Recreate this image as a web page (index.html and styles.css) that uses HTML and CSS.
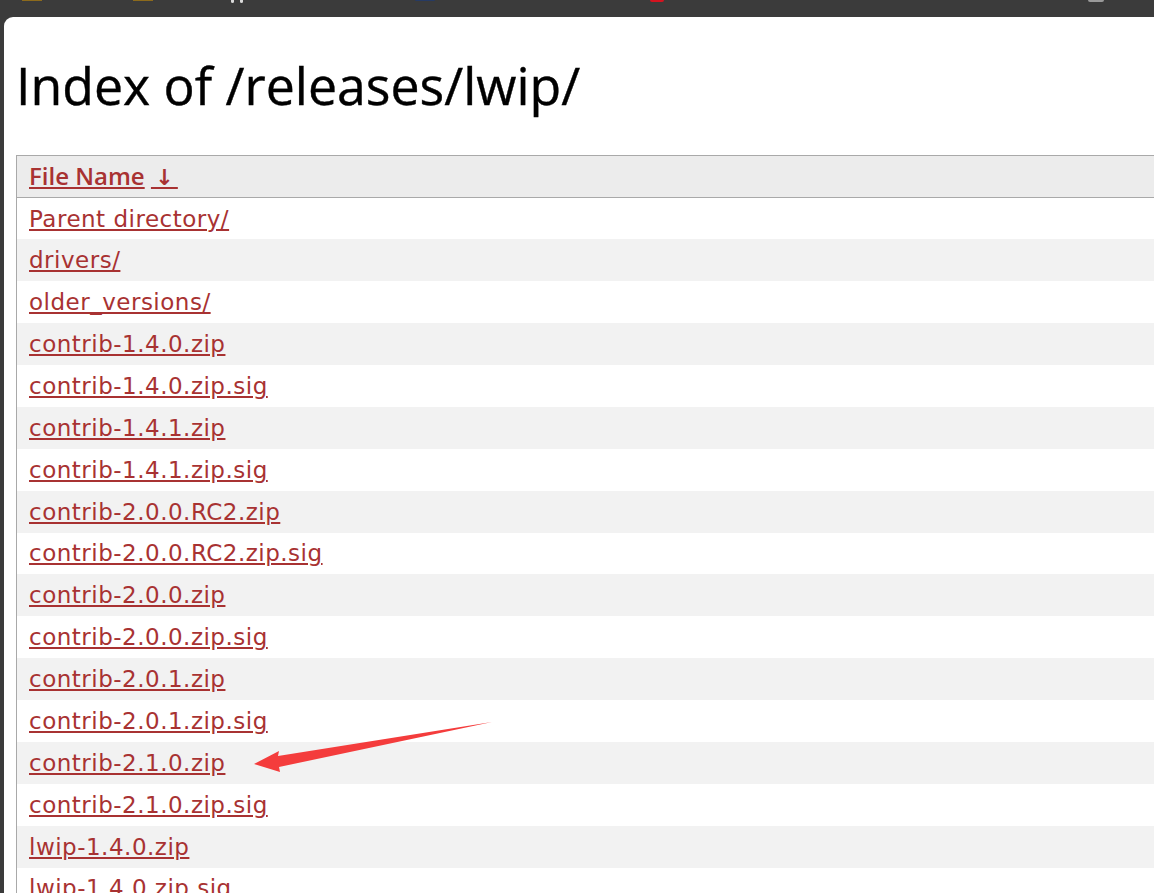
FILE: index.html
```html
<!DOCTYPE html>
<html>
<head>
<meta charset="utf-8">
<title>Index of /releases/lwip/</title>
<link rel="stylesheet" href="styles.css">
</head>
<body>
<div class="topbar">
  <span class="bm bm-gold b1"></span>
  <span class="bm bm-gold b2"></span>
  <span class="bm bm-white b3"></span>
  <span class="bm bm-white b4"></span>
  <span class="bm bm-navy b5"></span>
  <span class="bm bm-red b6"></span>
  <span class="bm bm-grey b7"></span>
</div>
<div class="page">
  <h1>Index of /releases/lwip/</h1>
  <table class="list">
    <thead>
      <tr><th><a href="#">File Name</a>&nbsp;<a href="#" class="sort">&nbsp;<span class="arr">↓</span>&nbsp;</a></th></tr>
    </thead>
    <tbody>
      <tr><td><a href="#">Parent directory/</a></td></tr>
      <tr><td><a href="#">drivers/</a></td></tr>
      <tr><td><a href="#">older_versions/</a></td></tr>
      <tr><td><a href="#">contrib-1.4.0.zip</a></td></tr>
      <tr><td><a href="#">contrib-1.4.0.zip.sig</a></td></tr>
      <tr><td><a href="#">contrib-1.4.1.zip</a></td></tr>
      <tr><td><a href="#">contrib-1.4.1.zip.sig</a></td></tr>
      <tr><td><a href="#">contrib-2.0.0.RC2.zip</a></td></tr>
      <tr><td><a href="#">contrib-2.0.0.RC2.zip.sig</a></td></tr>
      <tr><td><a href="#">contrib-2.0.0.zip</a></td></tr>
      <tr><td><a href="#">contrib-2.0.0.zip.sig</a></td></tr>
      <tr><td><a href="#">contrib-2.0.1.zip</a></td></tr>
      <tr><td><a href="#">contrib-2.0.1.zip.sig</a></td></tr>
      <tr><td><a href="#">contrib-2.1.0.zip</a></td></tr>
      <tr><td><a href="#">contrib-2.1.0.zip.sig</a></td></tr>
      <tr><td><a href="#">lwip-1.4.0.zip</a></td></tr>
      <tr><td><a href="#">lwip-1.4.0.zip.sig</a></td></tr>
    </tbody>
  </table>
</div>
<svg class="annot" width="1154" height="893" viewBox="0 0 1154 893">
  <path d="M492 722 L278 756 L279 751 L254 764 L280 772 L279 767 Z" fill="#f43c3c"/>
</svg>
</body>
</html>
```

FILE: styles.css
```css
html, body {
  margin: 0;
  padding: 0;
}
body {
  background: #3b3b3b;
  width: 1154px;
  height: 893px;
  overflow: hidden;
  position: relative;
  font-family: "DejaVu Sans", sans-serif;
}
.topbar {
  height: 17px;
  display: flex;
  align-items: flex-start;
}
.bm {
  display: block;
  height: 2px;
}
.bm-gold { background: #8c6a1c; width: 20px; height: 1px; }
.bm-white { background: #d8d8d8; width: 3px; height: 3px; border-radius: 0 0 2px 2px; }
.bm-navy { background: #263a63; width: 20px; height: 1px; border-radius: 0 0 4px 4px; }
.bm-red { background: #d4131f; width: 14px; height: 2px; border-radius: 0 0 7px 7px; }
.bm-grey { background: #9a9a9a; width: 16px; height: 2px; border-radius: 0 0 6px 6px; }
.b1 { margin-left: 22px; }
.b2 { margin-left: 91px; }
.b3 { margin-left: 78px; }
.b4 { margin-left: 6px; }
.b5 { margin-left: 172px; }
.b6 { margin-left: 215px; }
.b7 { margin-left: 424px; }

.page {
  margin-left: 4px;
  background: #fff;
  border-top-left-radius: 9px;
  height: 876px;
  padding: 38px 0 0 12px;
  box-sizing: border-box;
  overflow: hidden;
}
h1 {
  margin: 0 0 40px 0;
  font-family: "Open Sans", sans-serif;
  font-weight: normal;
  font-size: 51.8px;
  line-height: 60px;
  color: #000;
  white-space: nowrap;
  -webkit-text-stroke: 0.4px #000;
}
.list {
  border-collapse: collapse;
  border: 1px solid #a9a9a9;
  width: 1400px;
}
.list th, .list td {
  text-align: left;
  padding: 0 12px;
  height: 41.875px;
  box-sizing: border-box;
  font-size: 23px;
  line-height: 28px;
  letter-spacing: 0.5px;
  white-space: nowrap;
}
.list th {
  background: #ececec;
  border-bottom: 1px solid #a9a9a9;
  font-family: "Open Sans", sans-serif;
  font-weight: 600;
  font-size: 24px;
  letter-spacing: 0;
  height: 42px;
}
.list th .arr {
  font-family: "DejaVu Sans", sans-serif;
  font-weight: bold;
  font-size: 22px;
  letter-spacing: 0;
  margin: 0 -2px;
}
.list tbody tr:nth-child(even) td {
  background: #f2f2f2;
}
.list a {
  color: #a83232;
  text-decoration: underline;
  text-decoration-thickness: 2px;
  text-underline-offset: 2px;
}
.annot {
  position: absolute;
  left: 0;
  top: 0;
  pointer-events: none;
}
```
